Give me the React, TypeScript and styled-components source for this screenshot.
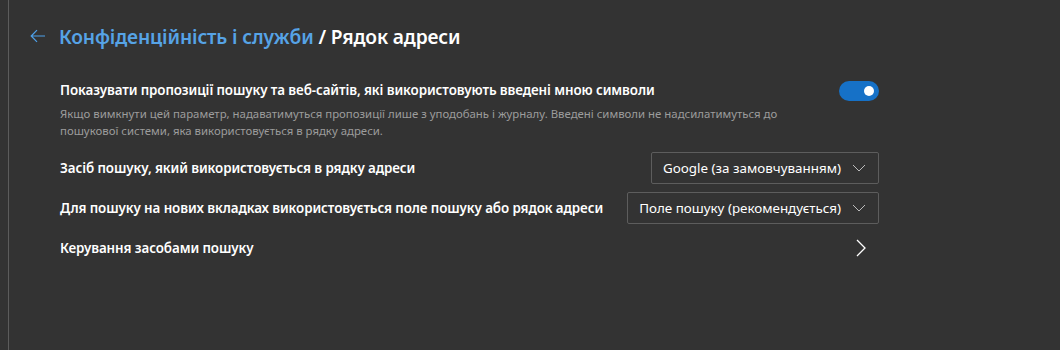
import React from "react";
import styled, { createGlobalStyle } from "styled-components";

const Global = createGlobalStyle`
  html, body {
    margin: 0;
    padding: 0;
    background: #333333;
  }
  body {
    font-family: "Noto Sans", "Segoe UI", sans-serif;
    color: #ffffff;
  }
`;

const Page = styled.div`
  height: 350px;
  display: flex;
  background: #333333;
`;

const Rail = styled.div`
  width: 8px;
  border-right: 1px solid #5c5c5c;
  flex-shrink: 0;
`;

const Content = styled.main`
  width: 849px;
  padding: 20px 0 0 21px;
  display: flex;
  flex-direction: column;
`;

const Header = styled.div`
  display: flex;
  align-items: center;
  height: 32px;
  margin-bottom: 29px;
`;

const BackButton = styled.button`
  width: 30px;
  height: 32px;
  padding: 0;
  border: none;
  background: transparent;
  display: flex;
  align-items: center;
  color: #4ea1ea;
  cursor: pointer;
`;

const Title = styled.h1`
  margin: 0;
  margin-left: -1px;
  font-size: 19.2px;
  font-weight: 600;
  letter-spacing: -0.15px;
  color: #ffffff;
`;

const Crumb = styled.span`
  color: #56a3e6;
`;

const Section = styled.div`
  padding-left: 30px;
  display: flex;
  flex-direction: column;
`;

const Row = styled.div<{ $h: number }>`
  display: flex;
  align-items: center;
  justify-content: space-between;
  min-height: ${(p) => p.$h}px;
`;

const ToggleRow = styled.div`
  display: grid;
  grid-template-columns: 1fr auto;
  column-gap: 20px;
  padding-bottom: 9px;
`;

const Label = styled.div`
  font-size: 13.4px;
  font-weight: 600;
  letter-spacing: -0.1px;
  color: #ffffff;
  white-space: nowrap;
`;

const Description = styled.div`
  margin-top: 6px;
  font-size: 11.4px;
  line-height: 17px;
  color: #9c9c9c;
  max-width: 740px;
`;

const Toggle = styled.div<{ $on: boolean }>`
  width: 40px;
  height: 20px;
  border-radius: 10px;
  background: ${(p) => (p.$on ? "#1671c7" : "transparent")};
  display: flex;
  align-items: center;
  justify-content: ${(p) => (p.$on ? "flex-end" : "flex-start")};
  padding: 0 5px;
  box-sizing: border-box;

  &::after {
    content: "";
    width: 10px;
    height: 10px;
    border-radius: 50%;
    background: #ffffff;
  }
`;

const Select = styled.button`
  height: 32px;
  box-sizing: border-box;
  border: 1px solid #5d5d5d;
  border-radius: 2px;
  background: #333333;
  color: #ffffff;
  font-family: inherit;
  font-size: 13.4px;
  white-space: nowrap;
  display: flex;
  align-items: center;
  gap: 11px;
  padding: 0 12px 0 11px;
`;

const Chevron = styled.span`
  display: flex;
  color: #bdbdbd;
`;

const ChevronDown = () => (
  <svg width="14" height="8" viewBox="0 0 14 8" fill="none">
    <path d="M1 1l6 6 6-6" stroke="currentColor" strokeWidth="1" />
  </svg>
);

const ChevronRight = () => (
  <svg width="10" height="18" viewBox="0 0 10 18" fill="none">
    <path d="M1 1l8 8-8 8" stroke="#ffffff" strokeWidth="1.3" />
  </svg>
);

const ArrowLeft = () => (
  <svg width="16" height="14" viewBox="0 0 16 14" fill="none">
    <path d="M15 7H1.5M7 1.2L1.2 7 7 12.8" stroke="currentColor" strokeWidth="1.2" />
  </svg>
);

const Link = styled.div`
  display: flex;
  padding-right: 13px;
`;

export default function App() {
  return (
    <>
      <Global />
      <Page>
        <Rail />
        <Content>
          <Header>
            <BackButton aria-label="Назад">
              <ArrowLeft />
            </BackButton>
            <Title>
              <Crumb>Конфіденційність і служби</Crumb> / Рядок адреси
            </Title>
          </Header>
          <Section>
            <ToggleRow>
              <div>
                <Label>
                  Показувати пропозиції пошуку та веб-сайтів, які використовують введені мною символи
                </Label>
                <Description>
                  Якщо вимкнути цей параметр, надаватимуться пропозиції лише з уподобань і журналу. Введені символи не надсилатимуться до пошукової системи, яка використовується в рядку адреси.
                </Description>
              </div>
              <Toggle $on />
            </ToggleRow>
            <Row $h={40}>
              <Label>Засіб пошуку, який використовується в рядку адреси</Label>
              <Select>
                Google (за замовчуванням)
                <Chevron>
                  <ChevronDown />
                </Chevron>
              </Select>
            </Row>
            <Row $h={40}>
              <Label>Для пошуку на нових вкладках використовується поле пошуку або рядок адреси</Label>
              <Select>
                Поле пошуку (рекомендується)
                <Chevron>
                  <ChevronDown />
                </Chevron>
              </Select>
            </Row>
            <Row $h={40}>
              <Label>Керування засобами пошуку</Label>
              <Link>
                <ChevronRight />
              </Link>
            </Row>
          </Section>
        </Content>
      </Page>
    </>
  );
}
